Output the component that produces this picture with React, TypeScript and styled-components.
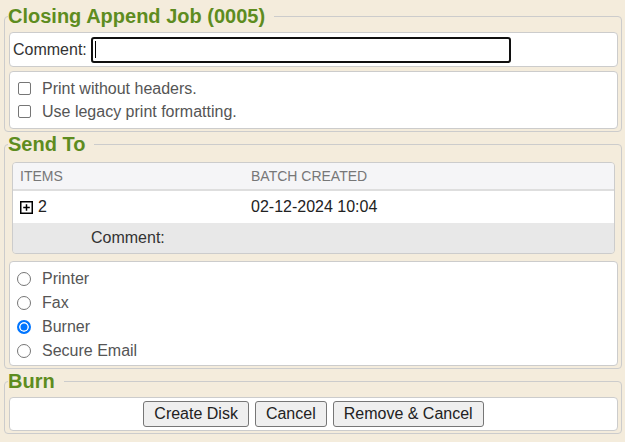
import { createGlobalStyle } from "styled-components";
import styled from "styled-components";

const legendColor = "#5e8c1f";
const lineColor = "#cccccc";

const GlobalStyle = createGlobalStyle`
  html, body {
    margin: 0;
    padding: 0;
    background: #f4ecdc;
  }
  body {
    font-family: "Liberation Sans", Arial, sans-serif;
    font-size: 16px;
  }
  * {
    box-sizing: border-box;
  }
`;

const Page = styled.div`
  display: flex;
  flex-direction: column;
  gap: 1px;
  padding: 5px 3px 0 4px;
  min-height: 442px;
`;

const Section = styled.fieldset`
  margin: 0;
  padding: 4px 3px 2px 4px;
  border: 1px solid ${lineColor};
  border-radius: 4px;
  min-width: 0;
`;

const Legend = styled.legend`
  padding: 0 9px 0 0;
  margin-left: -1px;
  font-size: 20px;
  line-height: 23px;
  font-weight: bold;
  color: ${legendColor};
`;

const Body = styled.div`
  display: flex;
  flex-direction: column;
  gap: 4px;
`;

const Panel = styled.div<{ $pad?: string; $height?: number }>`
  background: #ffffff;
  border: 1px solid ${lineColor};
  border-radius: 4px;
  padding: ${(p) => p.$pad || "0"};
  ${(p) => (p.$height ? `height: ${p.$height}px;` : "")}
`;

const CommentRow = styled(Panel)`
  display: flex;
  align-items: center;
  gap: 4px;
  color: #333;
`;

const InputWrap = styled.div`
  position: relative;
  display: flex;
`;

const TextInput = styled.input`
  width: 420px;
  height: 26px;
  border: 2px solid #101010;
  border-radius: 3px;
  padding: 0 4px;
  font: inherit;
  outline: none;
  background: #fff;
`;

const Caret = styled.span`
  position: absolute;
  left: 4px;
  top: 4px;
  width: 1px;
  height: 17px;
  background: #000;
`;

const OptionList = styled(Panel)`
  display: flex;
  flex-direction: column;
`;

const Option = styled.label<{ $h: number }>`
  display: flex;
  align-items: center;
  height: ${(p) => p.$h}px;
  color: #555;
`;

const Check = styled.input`
  appearance: none;
  width: 13px;
  height: 13px;
  margin: 0 11px 0 8px;
  border: 1px solid #767676;
  border-radius: 2px;
  background: #fff;
`;

const Radio = styled.input`
  appearance: none;
  width: 14px;
  height: 14px;
  margin: 0 11px 0 7px;
  border: 1px solid #767676;
  border-radius: 50%;
  background: #fff;

  &:checked {
    border: 2px solid #0075ff;
    background: #0075ff;
    box-shadow: inset 0 0 0 1.5px #fff;
  }
`;

const Table = styled.div`
  margin: 2px 3px 3px;
  border: 1px solid ${lineColor};
  border-radius: 4px;
  overflow: hidden;
`;

const Row = styled.div<{ $bg: string; $h: number }>`
  display: grid;
  grid-template-columns: 231px 1fr;
  align-items: center;
  height: ${(p) => p.$h}px;
  background: ${(p) => p.$bg};
`;

const HeadRow = styled(Row)`
  border-bottom: 2px solid #dedede;
  color: #777;
  font-size: 14px;
  text-transform: uppercase;
`;

const Cell = styled.div`
  display: flex;
  align-items: center;
  gap: 5px;
  padding: 0 7px;
  color: #222;
`;

const HeadCell = styled(Cell)`
  color: #777;
`;

const NoteCell = styled.div`
  grid-column: 1 / span 2;
  padding-left: 78px;
  color: #333;
`;

const ButtonBar = styled(Panel)`
  display: flex;
  justify-content: center;
  align-items: center;
  gap: 6px;
  height: 34px;
`;

const Button = styled.button`
  height: 26px;
  padding: 0 10px;
  font: inherit;
  color: #222;
  background: #efefef;
  border: 1px solid #767676;
  border-radius: 3px;
`;

const PlusBox = () => (
  <svg width="13" height="13" viewBox="0 0 13 13">
    <rect x="0.75" y="0.75" width="11.5" height="11.5" fill="#fff" stroke="#000" strokeWidth="1.5" />
    <path d="M6.5 3.2v6.6M3.2 6.5h6.6" stroke="#000" strokeWidth="1.5" />
  </svg>
);

const printOptions = ["Print without headers.", "Use legacy print formatting."];
const destinations = ["Printer", "Fax", "Burner", "Secure Email"];

export default function App() {
  return (
    <>
      <GlobalStyle />
      <Page>
        <Section>
          <Legend>Closing Append Job (0005)</Legend>
          <Body>
            <CommentRow $pad="0 3px" $height={35}>
              <span>Comment:</span>
              <InputWrap>
                <TextInput type="text" defaultValue="" />
                <Caret />
              </InputWrap>
            </CommentRow>
            <OptionList $pad="5px 0 4px" $height={58}>
              {printOptions.map((label) => (
                <Option key={label} $h={23}>
                  <Check type="checkbox" />
                  {label}
                </Option>
              ))}
            </OptionList>
          </Body>
        </Section>

        <Section>
          <Legend>Send To</Legend>
          <Body>
            <Table>
              <HeadRow $bg="#f5f5f7" $h={28}>
                <HeadCell>Items</HeadCell>
                <HeadCell>Batch Created</HeadCell>
              </HeadRow>
              <Row $bg="#ffffff" $h={32}>
                <Cell>
                  <PlusBox />
                  2
                </Cell>
                <Cell>02-12-2024 10:04</Cell>
              </Row>
              <Row $bg="#e8e8e8" $h={30}>
                <NoteCell>Comment:</NoteCell>
              </Row>
            </Table>
            <OptionList $pad="5px 0 2px" $height={105}>
              {destinations.map((label) => (
                <Option key={label} $h={24}>
                  <Radio type="radio" name="dest" defaultChecked={label === "Burner"} />
                  {label}
                </Option>
              ))}
            </OptionList>
          </Body>
        </Section>

        <Section>
          <Legend>Burn</Legend>
          <Body>
            <ButtonBar>
              <Button>Create Disk</Button>
              <Button>Cancel</Button>
              <Button>Remove &amp; Cancel</Button>
            </ButtonBar>
          </Body>
        </Section>
      </Page>
    </>
  );
}
